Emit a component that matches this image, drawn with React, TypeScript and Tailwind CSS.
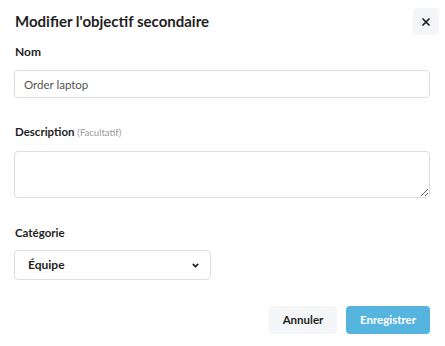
import { X, ChevronDown } from "lucide-react";

export default function App() {
  return (
    <div className="w-[445px] h-[346px] bg-white px-[14px] pt-[8px] font-['Lato',sans-serif] text-[#1f1f1f]">
      <div className="flex items-center justify-between h-[27px]">
        <h2 className="text-[15px] font-bold leading-none pl-px">Modifier l'objectif secondaire</h2>
        <button className="w-[26px] h-[27px] -mr-[8px] rounded bg-[#f4f5f7] flex items-center justify-center">
          <X size={12} strokeWidth={3.5} />
        </button>
      </div>

      <label className="block mt-[9px] text-[12px] font-bold leading-[16px] pl-px">Nom</label>
      <input
        className="mt-[10px] block w-[416px] h-[28px] rounded border border-[#dedede] px-[9px] text-[11.5px] text-[#555] outline-none"
        defaultValue="Order laptop"
      />

      <label className="block mt-[26px] text-[11.5px] font-bold leading-[16px] pl-px">
        Description <span className="text-[9.5px] font-normal text-[#9a9a9a]">(Facultatif)</span>
      </label>
      <textarea className="mt-[10px] block w-[416px] h-[47px] rounded border border-[#dedede] px-[9px] py-[6px] text-[11.5px] outline-none" />

      <label className="block mt-[27px] text-[11.5px] font-bold leading-[16px] pl-px">Catégorie</label>
      <div className="mt-[9px] w-[197px] h-[30px] rounded border border-[#dedede] flex items-center justify-between pl-[13px] pr-[10px]">
        <span className="text-[12px] font-bold">Équipe</span>
        <ChevronDown size={9} strokeWidth={4.5} />
      </div>

      <div className="mt-[26px] flex justify-end gap-[9px] pr-px">
        <button className="w-[68px] h-[28px] rounded bg-[#f4f5f7] text-[11.5px] font-bold">Annuler</button>
        <button className="w-[84px] h-[28px] rounded bg-[#56b5de] text-white text-[11.5px] font-bold">Enregistrer</button>
      </div>
    </div>
  );
}
